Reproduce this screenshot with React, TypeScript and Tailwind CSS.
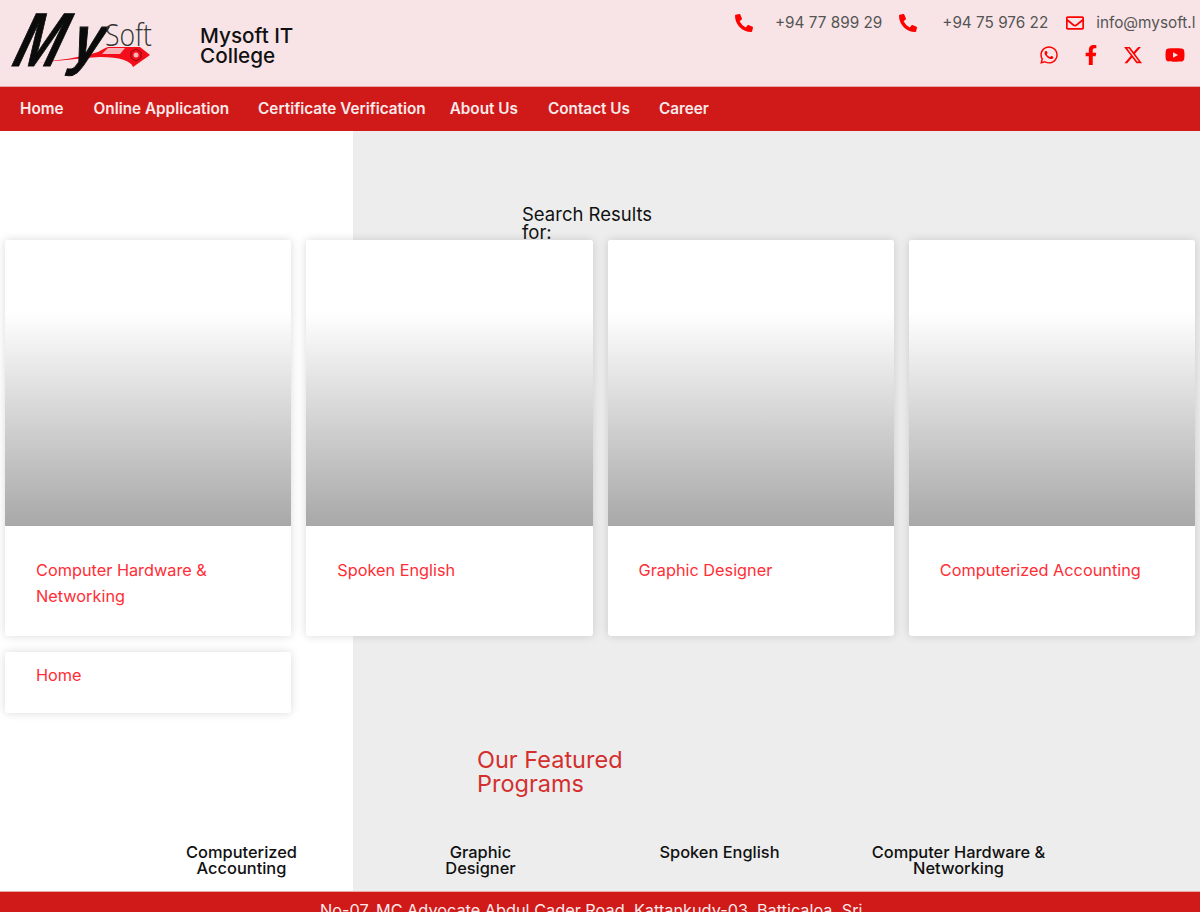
import { FaPhoneAlt, FaRegEnvelope, FaWhatsapp, FaFacebookF, FaYoutube } from 'react-icons/fa';
import { FaXTwitter } from 'react-icons/fa6';

const cards = [
  'Computer Hardware & Networking',
  'Spoken English',
  'Graphic Designer',
  'Computerized Accounting',
];

const programs = [
  ['Computerized', 'Accounting'],
  ['Graphic', 'Designer'],
  ['Spoken English'],
  ['Computer Hardware &', 'Networking'],
];

function Logo() {
  return (
    <svg viewBox="0 0 146 66" className="w-[146px] h-[66px] shrink-0">
      {/* red swoosh */}
      <path d="M27 52 C50 49 72 47 90 41 C94 39 96 37 100 36 L132 36 L142 44 L125 56 C123 50 112 46 92 46 C72 47 50 50 27 52 Z" fill="#f40d1a" />
      <path d="M100 37 L117 37 L112 43 L94 43 Z" fill="#f7b5ba" />
      <polygon points="128,38 133,41 133,47 128,50 123,47 123,41" fill="none" stroke="#8a0a10" strokeWidth="1" />
      <circle cx="128" cy="44" r="2.5" fill="#f7b5ba" />
      {/* brush lettering */}
      <text transform="translate(0 55) skewX(-25)" fontFamily="'Liberation Sans', sans-serif" fontWeight="700" fontSize="76" fill="#0b0b0b" stroke="#0b0b0b" strokeWidth="1" textLength="46" lengthAdjust="spacingAndGlyphs">M</text>
      <text transform="translate(59 51) skewX(-20)" fontFamily="'Liberation Sans', sans-serif" fontWeight="700" fontSize="66" fill="#0b0b0b" stroke="#0b0b0b" strokeWidth="1" textLength="30" lengthAdjust="spacingAndGlyphs">y</text>
      <text x="97" y="35" fontFamily="'Open Sans', sans-serif" fontWeight="300" fontSize="31" fill="#333" textLength="47" lengthAdjust="spacingAndGlyphs">Soft</text>
    </svg>
  );
}

function ContactItem({ icon, text, textClass }: { icon: React.ReactNode; text: string; textClass: string }) {
  return (
    <div className="flex items-center shrink-0">
      {icon}
      <span className={textClass}>{text}</span>
    </div>
  );
}

export default function App() {
  return (
    <div className="h-[912px] w-[1200px] overflow-hidden font-['Inter',sans-serif] bg-[linear-gradient(to_right,#ffffff_353px,#ededed_353px)]">
      {/* Top header */}
      <header className="h-[87px] bg-[#f8e4e6] flex justify-between overflow-hidden border-b border-[#e8a9a9]">
        <div className="flex pl-2 pt-[11px]">
          <Logo />
          <h1 className="ml-[46px] mt-[15px] w-[110px] text-[20.7px] leading-5 font-medium text-[#111]">Mysoft IT College</h1>
        </div>
        <div className="w-[460px] mr-[5px] shrink-0 pt-[13px] overflow-hidden">
          <div className="flex text-[15.3px] leading-5 text-[#555] whitespace-nowrap">
            <ContactItem icon={<FaPhoneAlt className="text-[#ff0000] text-[18px]" />} text="+94 77 899 29" textClass="ml-[22px]" />
            <ContactItem icon={<FaPhoneAlt className="ml-[17px] text-[#ff0000] text-[18px]" />} text="+94 75 976 22" textClass="ml-[25px]" />
            <ContactItem icon={<FaRegEnvelope className="ml-[18px] text-[#ff0000] text-[18px]" />} text="info@mysoft.lk" textClass="ml-[12px]" />
          </div>
          <div className="flex justify-end mt-3 pr-[10px] text-[#ff0000] text-[20px] gap-[22px]">
            <FaWhatsapp />
            <FaFacebookF />
            <FaXTwitter />
            <FaYoutube />
          </div>
        </div>
      </header>

      {/* Main nav */}
      <nav className="h-[44px] bg-[#d01919] flex items-center pl-5 text-[15.3px] font-semibold text-[#fbeaea] whitespace-nowrap">
        <a>Home</a>
        <a className="ml-[30px]">Online Application</a>
        <a className="ml-[29px]">Certificate Verification</a>
        <a className="ml-[24px]">About Us</a>
        <a className="ml-[30px]">Contact Us</a>
        <a className="ml-[29px]">Career</a>
      </nav>

      {/* Search results */}
      <h2 className="mt-[74px] ml-[522px] w-[150px] h-[35px] text-[18.5px] leading-[18px] text-[#111]">Search Results for:</h2>

      <div className="grid grid-cols-4 gap-x-[15px] gap-y-[16px] px-[5px]">
        {cards.map((title) => (
          <div key={title} className="h-[396px] bg-white rounded-[3px] shadow-[0_0_10px_rgba(0,0,0,0.15)] overflow-hidden">
            <div className="h-[286px] bg-[linear-gradient(to_bottom,#ffffff_25%,#a8a8a8_100%)]" />
            <p className="pt-[31px] px-[31px] text-[16.3px] leading-[26.4px] text-[#ff2d35]">{title}</p>
          </div>
        ))}
        <div className="h-[61px] bg-white rounded-[3px] shadow-[0_0_10px_rgba(0,0,0,0.15)]">
          <p className="pt-[10px] px-[31px] text-[16.3px] leading-[26.4px] text-[#ff2d35]">Home</p>
        </div>
      </div>

      {/* Featured programs */}
      <h2 className="mt-[35px] ml-[477px] w-[170px] text-[23.5px] leading-6 text-[#d32f2f]">Our Featured Programs</h2>
      <div className="mt-[48px] mx-auto w-[956px] grid grid-cols-4">
        {programs.map((lines) => (
          <h3 key={lines[0]} className="h-[47px] text-center text-[16.4px] leading-4 font-medium text-[#111]">
            {lines.map((line) => (
              <span key={line} className="block">{line}</span>
            ))}
          </h3>
        ))}
      </div>

      <footer className="bg-[#d01919] h-[100px] pt-[8px] px-[320px] text-[16.3px] leading-5 text-[#fbeaea] border-t border-[#e8a9a9]">
        <p className="w-[560px]">No-07, MC Advocate Abdul Cader Road, Kattankudy-03, Batticaloa, Sri Lanka</p>
      </footer>
    </div>
  );
}
